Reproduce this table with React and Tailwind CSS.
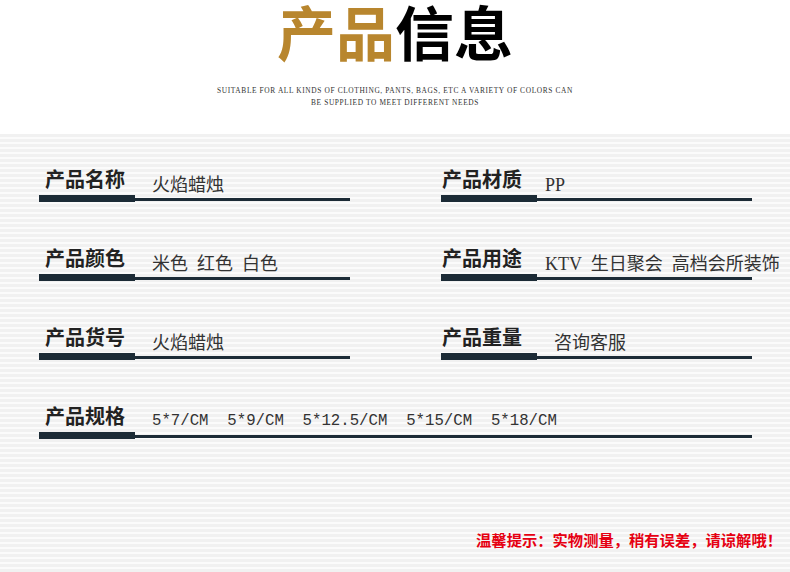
const fields = [
  { label: "产品名称", value: "火焰蜡烛" },
  { label: "产品材质", value: "PP", right: true },
  { label: "产品颜色", value: "米色  红色  白色" },
  { label: "产品用途", value: "KTV  生日聚会  高档会所装饰", right: true },
  { label: "产品货号", value: "火焰蜡烛" },
  { label: "产品重量", value: "  咨询客服", right: true },
];

const serif = "font-['Liberation_Serif','Noto_Sans_CJK_SC',serif]";

function Field({ label, value, mono, right }) {
  return (
    <div className="flex flex-col">
      <div className="flex items-end h-[30px] whitespace-nowrap">
        <div
          className={`w-[96px] shrink-0 ${right ? "pl-[1px]" : "pl-[6px]"} text-[20px] font-bold leading-none text-[#222] font-['Noto_Sans_CJK_SC',sans-serif] pb-[6px]`}
        >
          {label}
        </div>
        <div
          className={
            mono
              ? "pl-[17px] text-[15.7px] leading-none text-[#333] whitespace-pre font-['Liberation_Mono',monospace] pb-[2px]"
              : `${right ? "pl-[8px]" : "pl-[17px]"} shrink-0 text-[18px] leading-none text-[#333] whitespace-pre ${serif} pb-[1px]`
          }
        >
          {value}
        </div>
      </div>
      <div className="flex items-end h-[7px]">
        <div className="w-[96px] h-[7px] bg-[#1c2b36]" />
        <div className="flex-1 h-[3px] mb-[1px] bg-[#1c2b36]" />
      </div>
    </div>
  );
}

export default function App() {
  return (
    <div className="w-[790px] h-[572px] bg-white overflow-hidden flex flex-col">
      {/* Header */}
      <div className="h-[134px] flex flex-col items-center">
        <h1 className="mt-[1px] text-[59px] font-bold leading-[60px] font-['Noto_Sans_CJK_SC',sans-serif]">
          <span className="text-[#b8862e]">产品</span>
          <span className="text-black">信息</span>
        </h1>
        <p className="mt-[24px] w-[400px] text-center text-[7.4px] leading-[12px] tracking-[0.62px] text-[#333] uppercase font-['Liberation_Serif',serif]">
          Suitable for all kinds of clothing, pants, bags, etc a variety of colors can
          <br />
          be supplied to meet different needs
        </p>
      </div>

      {/* Details */}
      <div className="flex-1 bg-[repeating-linear-gradient(180deg,#f1f1f1_0px,#f1f1f1_3px,#fbfbfb_3px,#fbfbfb_5px)]">
        <div className="pl-[39px] pr-[38px] pt-[31px]">
          <div className="grid grid-cols-[311px_311px] justify-between gap-y-[42px]">
            {fields.map((f) => (
              <Field key={f.label} label={f.label} value={f.value} right={f.right} />
            ))}
          </div>
          <div className="mt-[42px]">
            <Field label="产品规格" value={"5*7/CM  5*9/CM  5*12.5/CM  5*15/CM  5*18/CM"} mono />
          </div>
          <div className="flex justify-end mt-[93px] mr-[-30px]">
            <p className="text-[15.3px] leading-none text-[#e60012] font-bold font-['Noto_Sans_CJK_SC',serif]">
              温馨提示：实物测量，稍有误差，请谅解哦！
            </p>
          </div>
        </div>
      </div>
    </div>
  );
}
